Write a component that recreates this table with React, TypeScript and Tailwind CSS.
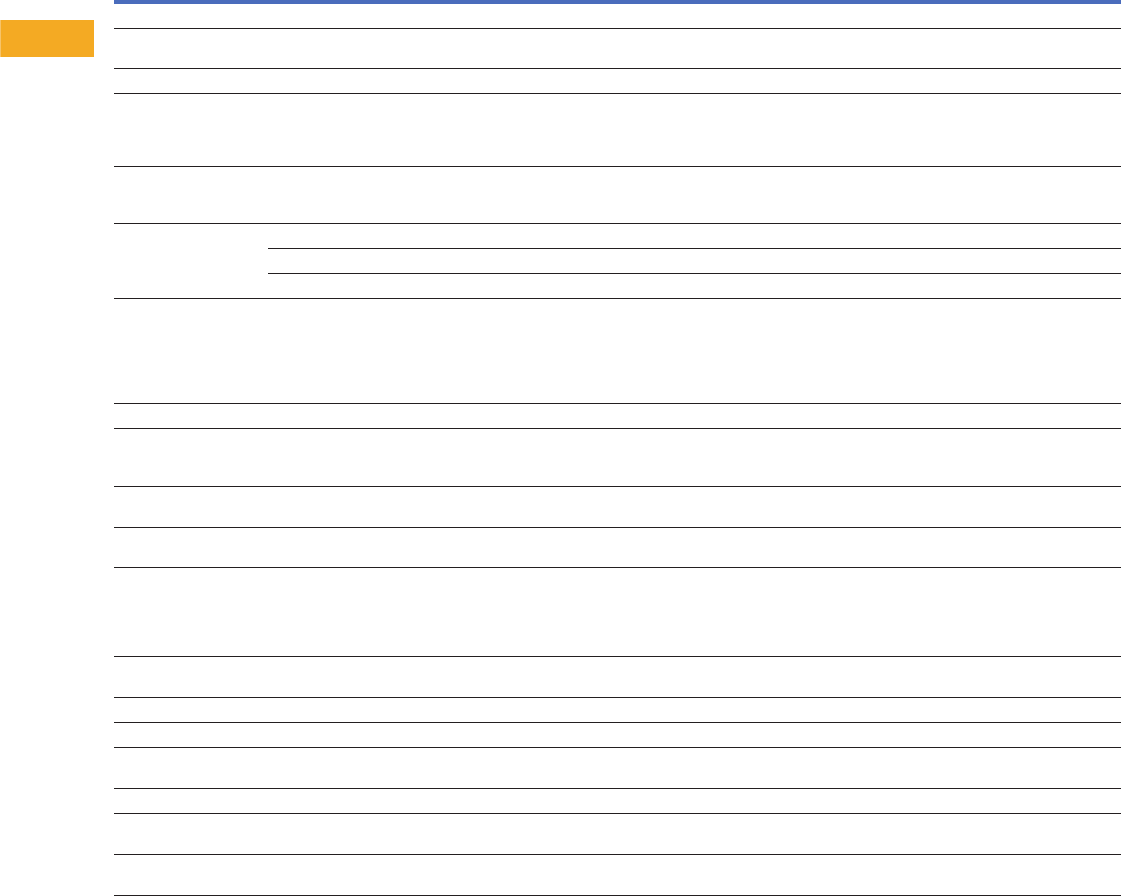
import * as React from 'react';

// row heights include the 1px rule at the bottom of each row
const rows: { h: string; sub?: string[] }[] = [
    { h: "h-[25px]" },
    { h: "h-[40px]" },
    { h: "h-[25px]" },
    { h: "h-[73px]" },
    { h: "h-[57px]" },
    { h: "h-[75px]", sub: ["h-[25px]", "h-[25px]", "h-[25px]"] },
    { h: "h-[105px]" },
    { h: "h-[25px]" },
    { h: "h-[58px]" },
    { h: "h-[41px]" },
    { h: "h-[40px]" },
    { h: "h-[89px]" },
    { h: "h-[41px]" },
    { h: "h-[25px]" },
    { h: "h-[25px]" },
    { h: "h-[41px]" },
    { h: "h-[25px]" },
    { h: "h-[41px]" },
    { h: "h-[41px]" },
];

const rule = "border-b border-[#231f20]";

function Row(props: { h: string; sub?: string[] }) {
    if (!props.sub) {
        return <div className={props.h + " " + rule}></div>;
    }
    return <div className={"flex flex-row " + props.h}>
        <div className={"w-[154px] " + rule}></div>
        <div className="flex flex-col grow-[1]">
            {props.sub.map((s, i) => <div key={i} className={s + " " + rule}></div>)}
        </div>
    </div>;
}

export default function App() {
    return <div className="flex flex-row gap-[20px] bg-white min-h-[896px] font-['Liberation_Sans',sans-serif]">
        <div className="w-[94px] shrink-0">
            <div className="mt-[20px] h-[37px] bg-[#f4aa23] border-l border-[#f7c46a]"></div>
        </div>
        <div className="w-[1007px] flex flex-col">
            <div className="h-[4px] bg-[#4a6cbc]"></div>
            {rows.map((r, i) => <Row key={i} h={r.h} sub={r.sub} />)}
        </div>
    </div>;
}
